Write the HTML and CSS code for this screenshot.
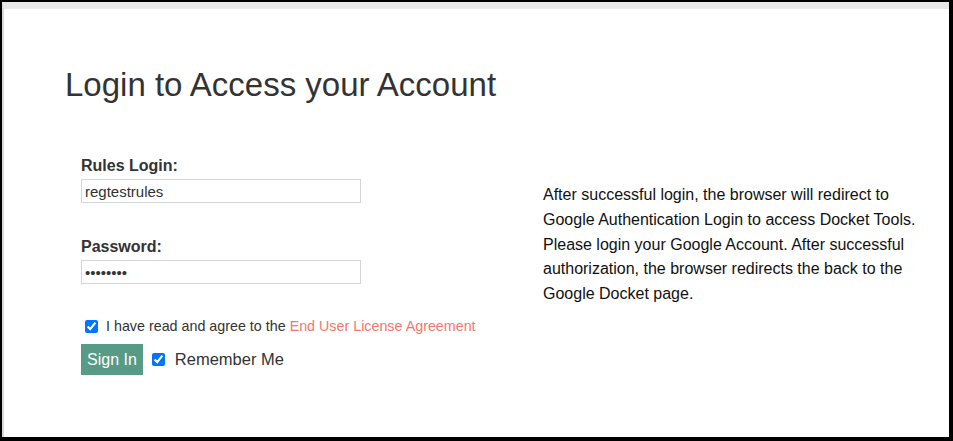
FILE: index.html
```html
<!DOCTYPE html>
<html lang="en">
<head>
    <meta charset="UTF-8">
    <meta name="viewport" content="width=device-width, initial-scale=1.0">
    <title>Login to Access your Account</title>
    <link rel="stylesheet" href="styles.css">
</head>
<body>
<div class="window">
    <div class="page">
        <h1 class="title">Login to Access your Account</h1>

        <div class="columns">
            <!-- Форма входа -->
            <form class="login-form" onsubmit="return false;">
                <div class="field">
                    <label for="login">Rules Login:</label>
                    <input type="text" id="login" value="regtestrules">
                </div>
                <div class="field">
                    <label for="password">Password:</label>
                    <input type="password" id="password" value="password">
                </div>
                <div class="agree">
                    <input type="checkbox" id="eula" checked>
                    <label for="eula">I have read and agree to the <a href="#">End User License Agreement</a></label>
                </div>
                <div class="actions">
                    <button type="submit">Sign In</button>
                    <input type="checkbox" id="remember" checked>
                    <label for="remember">Remember Me</label>
                </div>
            </form>

            <!-- Пояснение -->
            <div class="info">
                <p>After successful login, the browser will redirect to Google Authentication Login to access Docket Tools. Please login your Google Account. After successful authorization, the browser redirects the back to the Google Docket page.</p>
            </div>
        </div>
    </div>
</div>
</body>
</html>
```

FILE: styles.css
```css
:root {
    --color-frame: #000;
    --color-bar: #e9e9e9;
    --color-text: #333;
    --color-border: #d6d6d6;
    --color-button-bg: #579b86;
    --color-link: #f4776b;
}

body {
    margin: 0;
    padding: 2px 4px 4px 2px;
    background-color: var(--color-frame);
    font-family: "Liberation Sans", Arial, sans-serif;
    color: var(--color-text);
}

.window {
    height: 435px;
    box-sizing: border-box;
    background-color: #fff;
    border-top: 7px solid var(--color-bar);
    border-left: 2px solid #d9d9d9;
}

.page {
    padding: 58px 0 0 61px;
}

.title {
    margin: 0;
    font-size: 33px;
    font-weight: normal;
    line-height: 36px;
}

.columns {
    display: flex;
    margin-top: 53px;
}

.login-form {
    width: 462px;
    padding-left: 16px;
}

.field {
    margin-bottom: 34px;
}

.field label {
    display: block;
    font-weight: bold;
    font-size: 16px;
    line-height: 20px;
    margin-bottom: 3px;
}

.field input {
    display: block;
    width: 280px;
    height: 24px;
    box-sizing: border-box;
    border: 1px solid var(--color-border);
    padding: 0 3px;
    font-family: inherit;
    font-size: 15px;
    color: var(--color-text);
    outline: none;
}

.agree {
    display: flex;
    align-items: center;
    margin-top: 0;
    padding-left: 4px;
    font-size: 14.3px;
}

.agree input {
    margin: 0 8px 0 0;
    width: 13px;
    height: 13px;
}

.agree a {
    color: var(--color-link);
    text-decoration: none;
}

.actions {
    display: flex;
    align-items: center;
    margin-top: 10px;
    font-size: 16.5px;
}

.actions button {
    background-color: var(--color-button-bg);
    color: #fff;
    border: none;
    padding: 0 6px;
    height: 31px;
    font-family: inherit;
    font-size: 16px;
    cursor: pointer;
}

.actions input {
    margin: 0 10px 0 9px;
    width: 13px;
    height: 13px;
}

.info {
    width: 390px;
    padding-top: 27px;
}

.info p {
    margin: 0;
    font-size: 16px;
    line-height: 24.8px;
    color: #111;
}
```
